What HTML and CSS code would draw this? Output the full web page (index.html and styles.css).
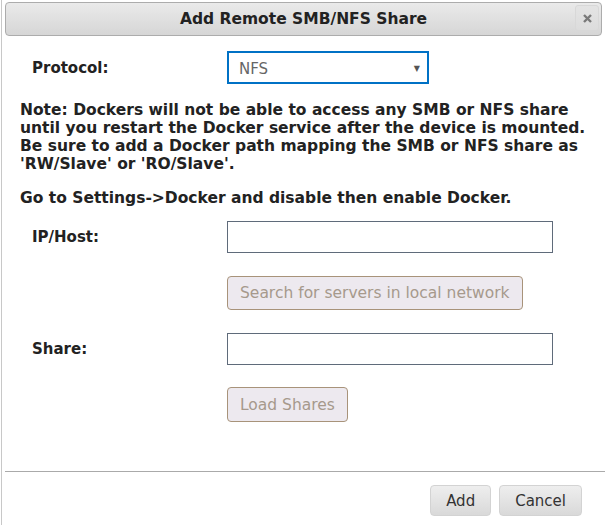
FILE: index.html
```html
<!DOCTYPE html>
<html lang="en">
<head>
  <meta charset="UTF-8" />
  <title>Add Remote SMB/NFS Share</title>
  <link rel="stylesheet" href="styles.css">
</head>
<body>
  <div class="dialog">
    <div class="titlebar">
      <span class="title">Add Remote SMB/NFS Share</span>
      <button type="button" class="close-button">
        <svg width="9" height="9" viewBox="0 0 9 9"><path d="M1 1L8 8M8 1L1 8" stroke="#7a7a7a" stroke-width="2.4" /></svg>
      </button>
    </div>

    <div class="content">
      <div class="row">
        <label class="field-label">Protocol:</label>
        <div class="select-box">
          <span>NFS</span>
          <span class="arrow">&#9660;</span>
        </div>
      </div>

      <p class="note">Note: Dockers will not be able to access any SMB or NFS share<br>
        until you restart the Docker service after the device is mounted.<br>
        Be sure to add a Docker path mapping the SMB or NFS share as<br>
        'RW/Slave' or 'RO/Slave'.</p>
      <p class="note note-second">Go to Settings-&gt;Docker and disable then enable Docker.</p>

      <div class="row row-input">
        <label class="field-label">IP/Host:</label>
        <input type="text" class="text-input" />
      </div>
      <div class="row row-button">
        <span class="field-label"></span>
        <button type="button" class="action-button" disabled>Search for servers in local network</button>
      </div>

      <div class="row row-input">
        <label class="field-label">Share:</label>
        <input type="text" class="text-input" />
      </div>
      <div class="row row-button">
        <span class="field-label"></span>
        <button type="button" class="action-button action-button-tall" disabled>Load Shares</button>
      </div>
    </div>

    <div class="footer">
      <button type="button" class="footer-button">Add</button>
      <button type="button" class="footer-button">Cancel</button>
    </div>
  </div>
</body>
</html>
```

FILE: styles.css
```css
* {
  box-sizing: border-box;
}

body {
  margin: 0;
  background-color: #ffffff;
  font-family: "DejaVu Sans", Verdana, sans-serif;
  color: #222222;
}

.dialog {
  margin-left: 1px;
  height: 525px;
  border-left: 1px solid #c8c8c8;
  padding: 2px 0 0 3px;
  display: flex;
  flex-direction: column;
}

.titlebar {
  height: 34px;
  margin-right: 3px;
  border: 1px solid #acacac;
  border-radius: 4px;
  background: linear-gradient(#eaeaea, #d6d6d6);
  display: flex;
  align-items: center;
  justify-content: center;
  position: relative;
}

.title {
  font-weight: bold;
  font-size: 15.5px;
  color: #222222;
}

.close-button {
  position: absolute;
  right: 2px;
  top: 2px;
  width: 24px;
  height: 26px;
  padding: 0;
  border: 1px solid #d8d8d8;
  border-radius: 3px;
  background: linear-gradient(#e4e4e4, #dcdcdc);
  display: flex;
  align-items: center;
  justify-content: center;
}

.content {
  padding: 15px 0 0 15px;
}

.row {
  display: flex;
  align-items: center;
}

.field-label {
  width: 207px;
  padding-left: 12px;
  font-weight: bold;
  font-size: 15px;
  flex-shrink: 0;
}

.select-box {
  width: 202px;
  height: 33px;
  border: 1px solid #0071c5;
  box-shadow: inset 0 0 0 1px #0071c5;
  display: flex;
  align-items: center;
  justify-content: space-between;
  padding: 2px 8px 0 11px;
  font-size: 15px;
  color: #666666;
}

.arrow {
  font-size: 8px;
  color: #555555;
}

.note {
  margin: 17px 0 0 0;
  font-weight: bold;
  font-size: 15.5px;
  line-height: 18px;
  white-space: nowrap;
}

.note-second {
  margin-top: 16px;
}

.row-input {
  margin-top: 14px;
}

.row-input + .row-button + .row-input {
  margin-top: 23px;
}

.text-input {
  width: 326px;
  height: 32px;
  border: 1px solid #5f6b7a;
  padding: 4px 8px;
}

.row-button {
  margin-top: 23px;
}

.row-input + .row-button + .row-input + .row-button {
  margin-top: 22px;
}

.action-button {
  height: 34px;
  padding: 0 12px;
  border: 1px solid #a8937a;
  border-radius: 4px;
  background-color: #ede9ef;
  color: #a6998c;
  font-family: "DejaVu Sans", Verdana, sans-serif;
  font-size: 15.5px;
}

.action-button-tall {
  height: 35px;
}

.footer {
  margin-top: auto;
  height: 54px;
  border-top: 1px solid #aaaaaa;
  display: flex;
  justify-content: flex-end;
  align-items: flex-start;
  gap: 8px;
  padding: 13px 23px 0 0;
}

.footer-button {
  height: 31px;
  padding: 0 15px;
  border: 1px solid #d3d3d3;
  border-radius: 4px;
  background: linear-gradient(#eeeeee, #d9d9d9);
  color: #333333;
  font-family: "DejaVu Sans", Verdana, sans-serif;
  font-size: 15px;
}
```
